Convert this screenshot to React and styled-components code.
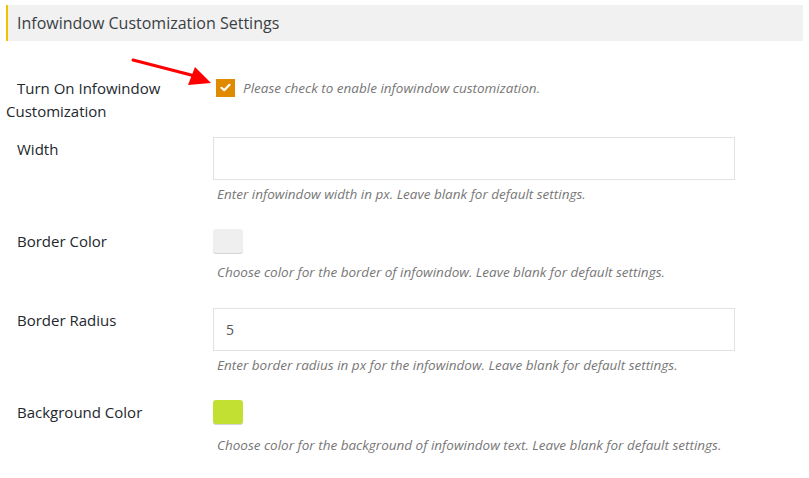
import React from 'react';
import styled, { createGlobalStyle } from 'styled-components';

const GlobalStyle = createGlobalStyle`
  body {
    margin: 0;
    background: #fff;
    font-family: "Open Sans", "Noto Sans", sans-serif;
    color: #23282d;
  }
`;

const Page = styled.div`
  position: relative;
  padding: 5px 6px 0 6px;
  height: 478px;
  box-sizing: border-box;
`;

const SectionHeader = styled.div`
  height: 36px;
  display: flex;
  align-items: center;
  background: #f1f1f1;
  border-left: 2px solid #f2c200;
  padding-left: 9px;
  font-size: 16px;
  color: #3a3f44;
`;

const Form = styled.div`
  display: flex;
  flex-direction: column;
  padding-top: 35px;
`;

const Row = styled.div`
  display: grid;
  grid-template-columns: 207px 522px;
  align-items: start;
  padding-bottom: ${props => props.gap || 23}px;
`;

const Label = styled.div`
  font-size: 15px;
  line-height: 23px;
  text-indent: 11px;
  padding-top: ${props => props.top || 1}px;
  color: #23282d;
`;

const Field = styled.div`
  display: flex;
  flex-direction: column;
  align-items: flex-start;
`;

const InlineField = styled.div`
  display: flex;
  align-items: center;
  gap: 8px;
  padding-left: 3px;
  height: 23px;
`;

const CheckBox = styled.span`
  width: 19px;
  height: 18px;
  background: #e08a00;
  display: inline-flex;
  align-items: center;
  justify-content: center;
`;

const TextInput = styled.div`
  width: 522px;
  height: 43px;
  box-sizing: border-box;
  border: 1px solid #e2e2e2;
  background: #fff;
  display: flex;
  align-items: center;
  padding-left: 12px;
  font-size: 14px;
  color: #555;
`;

const Swatch = styled.span`
  width: 30px;
  height: 24px;
  border-radius: 3px;
  background: ${props => props.color};
  box-shadow: 0 1px 0 #d4d4d4;
  margin-bottom: ${props => props.gap || 5}px;
`;

const Description = styled.div`
  font-size: 13.5px;
  font-style: italic;
  color: #777;
  line-height: 24px;
  padding-left: 4px;
  margin-top: 2px;
`;

const InlineNote = styled.span`
  font-size: 13.5px;
  font-style: italic;
  color: #777;
`;

const Arrow = styled.svg`
  position: absolute;
  left: 0;
  top: 0;
  pointer-events: none;
`;

const CheckMark = () => (
  <svg width="11" height="9" viewBox="0 0 11 9">
    <path d="M1.5 4.8 L4.2 7.2 L9.5 1.8" fill="none" stroke="#fff" strokeWidth="2.2" strokeLinecap="round" strokeLinejoin="round" />
  </svg>
);

export default function App() {
  return (
    <Page>
      <GlobalStyle />
      <SectionHeader>Infowindow Customization Settings</SectionHeader>
      <Form>
        <Row gap={14}>
          <Label top={0}>Turn On Infowindow Customization</Label>
          <InlineField>
            <CheckBox><CheckMark /></CheckBox>
            <InlineNote>Please check to enable infowindow customization.</InlineNote>
          </InlineField>
        </Row>
        <Row>
          <Label>Width</Label>
          <Field>
            <TextInput />
            <Description>Enter infowindow width in px. Leave blank for default settings.</Description>
          </Field>
        </Row>
        <Row gap={24}>
          <Label>Border Color</Label>
          <Field>
            <Swatch color="#efefef" />
            <Description>Choose color for the border of infowindow. Leave blank for default settings.</Description>
          </Field>
        </Row>
        <Row>
          <Label>Border Radius</Label>
          <Field>
            <TextInput>5</TextInput>
            <Description>Enter border radius in px for the infowindow. Leave blank for default settings.</Description>
          </Field>
        </Row>
        <Row>
          <Label>Background Color</Label>
          <Field>
            <Swatch color="#c2e032" gap={7} />
            <Description>Choose color for the background of infowindow text. Leave blank for default settings.</Description>
          </Field>
        </Row>
      </Form>
      <Arrow width="809" height="478">
        <line x1="133" y1="60" x2="195" y2="76" stroke="#f00" strokeWidth="3" strokeLinecap="round" />
        <polygon points="211,83 188,85 195,67" fill="#f00" />
      </Arrow>
    </Page>
  );
}
